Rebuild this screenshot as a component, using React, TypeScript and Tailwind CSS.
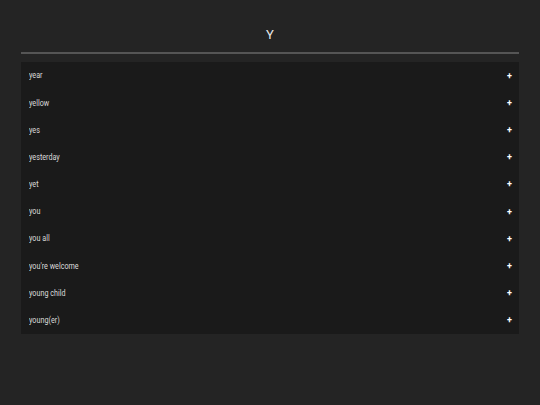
import React from "react";

const words = ["year","yellow","yes","yesterday","yet","you","you all","you're welcome","young child","young(er)"];

export default function App() {
  return (
    <div className="w-[540px] h-[405px] bg-[#242424] px-[20px] pt-[26px]" style={{fontFamily: "Roboto, 'Noto Sans', sans-serif"}}>
      <div className="text-center text-[#e8e8e8] text-[13px] leading-[18px] h-[18px]">Y</div>
      <div className="mt-[8px] h-[2px] bg-[#555555] mx-[1px]"></div>
      <div className="mt-[8px] mx-[1px] bg-[#1a1a1a] flex flex-col">
        {words.map((w) => (
          <div key={w} className="h-[27.2px] flex items-center justify-between pt-[1px] pl-[8px] pr-[7px] text-[#dcdcdc]">
            <span className="inline-block text-[9px] scale-x-[0.8] origin-left whitespace-nowrap">{w}</span>
            <span className="text-white text-[9px] font-bold leading-none">+</span>
          </div>
        ))}
      </div>
    </div>
  );
}
